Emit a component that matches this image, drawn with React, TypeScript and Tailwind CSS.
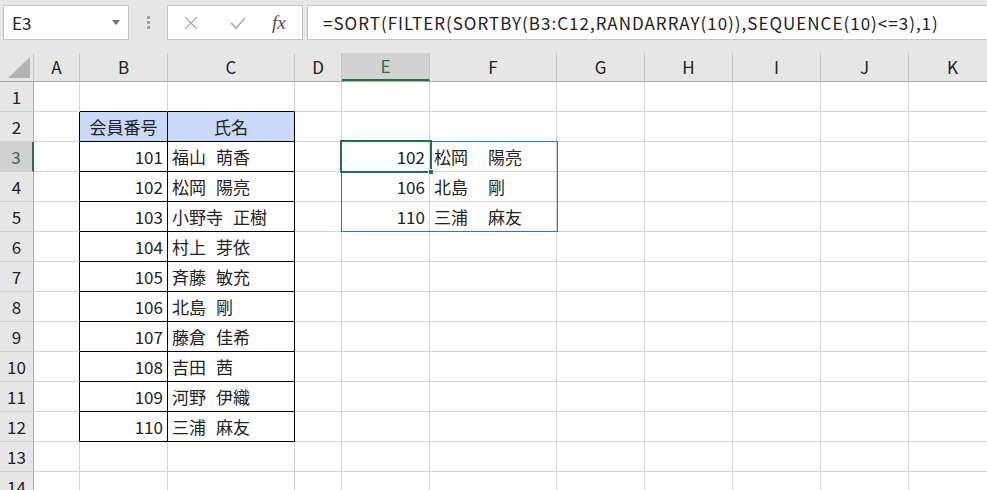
import React from 'react'

const cols = [
  { l: 'A', w: 'w-[46px]' },
  { l: 'B', w: 'w-[88px]' },
  { l: 'C', w: 'w-[127px]' },
  { l: 'D', w: 'w-[47px]' },
  { l: 'E', w: 'w-[88px]' },
  { l: 'F', w: 'w-[127px]' },
  { l: 'G', w: 'w-[88px]' },
  { l: 'H', w: 'w-[88px]' },
  { l: 'I', w: 'w-[88px]' },
  { l: 'J', w: 'w-[88px]' },
  { l: 'K', w: 'w-[88px]' },
]

const members: [number, string, string][] = [
  [101, '福山', '萌香'],
  [102, '松岡', '陽亮'],
  [103, '小野寺', '正樹'],
  [104, '村上', '芽依'],
  [105, '斉藤', '敏充'],
  [106, '北島', '剛'],
  [107, '藤倉', '佳希'],
  [108, '吉田', '茜'],
  [109, '河野', '伊織'],
  [110, '三浦', '麻友'],
]

const spill: [number, string, string][] = [
  [102, '松岡', '陽亮'],
  [106, '北島', '剛'],
  [110, '三浦', '麻友'],
]

const font = "font-['Noto_Sans_CJK_JP','Liberation_Sans',sans-serif]"

function cellContent(row: number, col: string) {
  if (row === 2 && col === 'B') return <span className="w-full text-center">会員番号</span>
  if (row === 2 && col === 'C') return <span className="w-full text-center">氏名</span>
  if (row >= 3 && row <= 12) {
    const m = members[row - 3]
    if (col === 'B') return <span className="w-full text-right pr-[4px]">{m[0]}</span>
    if (col === 'C')
      return (
        <span className="pl-[4px] flex">
          <span>{m[1]}</span>
          <span className="ml-[10px]">{m[2]}</span>
        </span>
      )
  }
  if (row >= 3 && row <= 5) {
    const s = spill[row - 3]
    if (col === 'E') return <span className="w-full text-right pr-[4px]">{s[0]}</span>
    if (col === 'F')
      return (
        <span className="pl-[4px] flex">
          <span className="w-[54px]">{s[1]}</span>
          <span>{s[2]}</span>
        </span>
      )
  }
  return null
}

function cellBorder(row: number, col: string) {
  const inTable = row >= 2 && row <= 12 && (col === 'B' || col === 'C')
  const right = inTable || (row >= 2 && row <= 12 && col === 'A') ? 'border-r-black' : 'border-r-[#d4d4d4]'
  const bottom = inTable || (row === 1 && (col === 'B' || col === 'C')) ? 'border-b-black' : 'border-b-[#d4d4d4]'
  const fill = row === 2 && inTable ? 'bg-[#c9daf8]' : ''
  return `${right} ${bottom} ${fill}`
}

export default function App() {
  const rows = Array.from({ length: 14 }, (_, i) => i + 1)
  return (
    <div className={`w-[987px] h-[490px] overflow-hidden bg-white text-[#222] ${font}`}>
      {/* formula bar */}
      <div className="h-[53px] bg-[#e6e6e6] flex items-start pt-[5px] pl-[3px]">
        <div className="w-[126px] h-[35px] bg-white border border-[#c6c6c6] flex items-center justify-between pl-[8px] pr-[8px] text-[17px]">
          <span>E3</span>
          <svg width="8" height="5" viewBox="0 0 8 5">
            <path d="M0 0 L8 0 L4 5 Z" fill="#707070" />
          </svg>
        </div>
        <div className="w-[38px] h-[35px] flex flex-col items-center justify-center gap-[2px]">
          <span className="w-[3px] h-[3px] bg-[#a0a0a0]" />
          <span className="w-[3px] h-[3px] bg-[#a0a0a0]" />
          <span className="w-[3px] h-[3px] bg-[#a0a0a0]" />
        </div>
        <div className="w-[136px] h-[35px] bg-white border border-[#c6c6c6] flex items-center pl-[16px]">
          <svg width="14" height="14" viewBox="0 0 14 14">
            <path d="M1 1 L13 13 M13 1 L1 13" stroke="#b0b0b0" strokeWidth="1.4" />
          </svg>
          <svg className="ml-[32px]" width="16" height="12" viewBox="0 0 16 12">
            <path d="M1 6 L6 11 L15 1" stroke="#b0b0b0" strokeWidth="1.8" fill="none" />
          </svg>
          <span className="ml-[26px] font-['Liberation_Serif',serif] italic text-[19px] text-[#505050] leading-none">
            fx
          </span>
        </div>
        <div className="ml-[4px] flex-1 h-[35px] bg-white border-y border-l border-[#c6c6c6] flex items-center pl-[15px] text-[17px] tracking-[1px] whitespace-pre">
          =SORT(FILTER(SORTBY(B3:C12,RANDARRAY(10)),SEQUENCE(10)&lt;=3),1)
        </div>
      </div>

      {/* column headers */}
      <div className="h-[29px] flex bg-[#e6e6e6] border-b border-[#ababab]">
        <div className="w-[34px] shrink-0 border-r border-[#c6c6c6] flex items-end justify-end pr-[3px] pb-[3px]">
          <svg width="22" height="21" viewBox="0 0 22 21">
            <path d="M22 0 L22 21 L0 21 Z" fill="#b4b4b4" />
          </svg>
        </div>
        {cols.map((c) => (
          <div
            key={c.l}
            className={`${c.w} shrink-0 border-r border-[#c6c6c6] flex items-center justify-center text-[17px] ${
              c.l === 'E' ? 'bg-[#d2d2d2] text-[#217346] border-b-2 border-b-[#217346]' : ''
            }`}
          >
            {c.l}
          </div>
        ))}
      </div>

      {/* grid */}
      <div className="relative">
        {rows.map((r) => (
          <div key={r} className="h-[30px] flex">
            <div
              className={`w-[34px] shrink-0 flex items-center justify-center text-[17px] border-b border-b-[#d4d4d4] ${
                r === 3
                  ? 'bg-[#d2d2d2] text-[#217346] border-r-2 border-r-[#217346]'
                  : 'bg-[#e6e6e6] border-r border-r-[#ababab]'
              }`}
            >
              {r}
            </div>
            {cols.map((c) => (
              <div
                key={c.l}
                className={`${c.w} shrink-0 border-r border-b flex items-center text-[17px] ${cellBorder(r, c.l)}`}
              >
                {cellContent(r, c.l)}
              </div>
            ))}
          </div>
        ))}

        {/* spill range outline */}
        <div className="absolute left-[341px] top-[59px] w-[217px] h-[91px] shadow-[inset_0_0_0_1px_#2f6fd8] pointer-events-none" />
        {/* active cell */}
        <div className="absolute left-[340px] top-[58px] w-[92px] h-[33px] border-2 border-[#217346] pointer-events-none" />
        <div className="absolute left-[428px] top-[87px] w-[6px] h-[6px] bg-[#217346] border border-white pointer-events-none" />
      </div>
    </div>
  )
}
